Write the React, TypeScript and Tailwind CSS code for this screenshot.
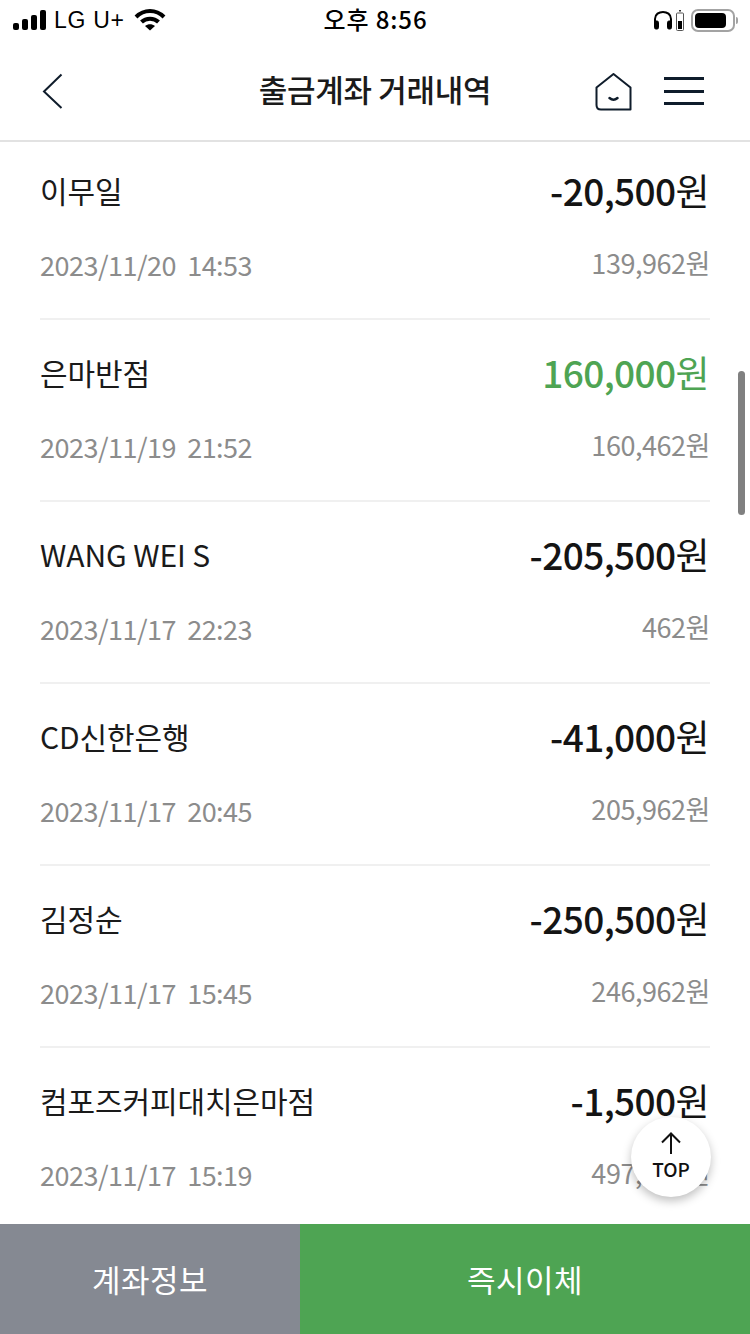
const transactions = [
  { name: "이무일", date: "2023/11/20  14:53", amount: "-20,500", balance: "139,962원" },
  { name: "은마반점", date: "2023/11/19  21:52", amount: "160,000", balance: "160,462원", income: true },
  { name: "WANG WEI S", date: "2023/11/17  22:23", amount: "-205,500", balance: "462원" },
  { name: "CD신한은행", date: "2023/11/17  20:45", amount: "-41,000", balance: "205,962원" },
  { name: "김정순", date: "2023/11/17  15:45", amount: "-250,500", balance: "246,962원" },
  { name: "컴포즈커피대치은마점", date: "2023/11/17  15:19", amount: "-1,500", balance: "497,462원" },
];

function StatusBar() {
  return (
    <div className="flex h-10 items-center justify-between pl-[13px] pr-[12px]">
      <div className="flex w-[200px] items-center">
        <svg width="35" height="20" viewBox="0 0 35 20" fill="#000">
          <rect x="0" y="13" width="6" height="7" rx="2" />
          <rect x="9" y="9" width="6" height="11" rx="2" />
          <rect x="18" y="5" width="6" height="15" rx="2" />
          <rect x="27" y="0" width="6" height="20" rx="2" />
        </svg>
        <span className="ml-[6px] text-[23px] leading-none tracking-[0.7px] text-black [font-family:'Liberation_Sans',sans-serif]">LG U+</span>
        <svg className="ml-[9px]" width="32" height="22" viewBox="0 0 32 22" fill="none" stroke="#000" strokeWidth="4">
          <path d="M2 8 C10 0 22 0 30 8" />
          <path d="M7.5 13 C12 8.5 20 8.5 24.5 13" />
          <path d="M11 17 L16 21.5 L21 17 C18 14.5 14 14.5 11 17 Z" fill="#000" stroke="none" />
        </svg>
      </div>
      <span className="-translate-y-[1px] text-[24px] font-medium leading-none tracking-[0.9px] text-black">오후 8:56</span>
      <div className="flex w-[200px] items-center justify-end">
        <svg width="20" height="20" viewBox="0 0 20 20" fill="none" stroke="#000" strokeWidth="2">
          <path d="M2 14 V9 C2 -0.5 18 -0.5 18 9 V14" />
          <rect x="1.5" y="11" width="4" height="8" rx="1.5" fill="#000" strokeWidth="1" />
          <rect x="14.5" y="11" width="4" height="8" rx="1.5" fill="#000" strokeWidth="1" />
        </svg>
        <svg className="ml-[3px]" width="8" height="21" viewBox="0 0 8 21">
          <rect x="3" y="0" width="2" height="1.5" fill="#333" />
          <rect x="0.5" y="3" width="7" height="17.5" rx="1" fill="none" stroke="#555" />
          <rect x="2" y="11" width="4" height="8" fill="#000" />
        </svg>
        <div className="ml-[7px] flex h-[23px] w-[44px] items-center rounded-[7px] border-2 border-[#a3a3a3] p-[2px]">
          <div className="h-full w-[31px] rounded-[4px] bg-black" />
        </div>
        <div className="ml-[1px] h-[7px] w-[2px] rounded-r-sm bg-[#a3a3a3]" />
      </div>
    </div>
  );
}

function NavBar() {
  return (
    <div className="relative flex h-[102px] items-start justify-between border-b-2 border-[#e2e2e2] pl-[42px] pr-[46px] pt-[33px]">
      <svg width="22" height="36" viewBox="0 0 22 36" fill="none" stroke="#0f1c2b" strokeWidth="2">
        <path d="M19.5 1.5 L2 18.5 L19.5 35" />
      </svg>
      <h1 className="absolute inset-x-0 top-[31px] text-center text-[31px] font-medium leading-[36px] tracking-[-0.3px] text-[#1a1a1a]">출금계좌 거래내역</h1>
      <div className="flex items-start gap-[32px]">
        <svg width="37" height="38" viewBox="0 0 37 38" fill="none" stroke="#0f1c2b" strokeWidth="2">
          <path d="M18.5 1 L35.5 14.5 V36.5 H6 Q1.5 36.5 1.5 32 V14.5 Z" strokeLinejoin="round" />
          <path d="M14.5 25 Q18.5 28.5 22.5 25" strokeWidth="2.5" strokeLinecap="round" />
        </svg>
        <div className="flex h-[28px] w-[40px] translate-y-[4px] flex-col justify-between">
          <div className="h-[3px] bg-[#0f1c2b]" />
          <div className="h-[3px] bg-[#0f1c2b]" />
          <div className="h-[3px] bg-[#0f1c2b]" />
        </div>
      </div>
    </div>
  );
}

export default function App() {
  return (
    <div className="relative flex h-[1334px] w-[750px] flex-col overflow-hidden bg-white [font-family:'Noto_Sans_CJK_KR',sans-serif]">
      <StatusBar />
      <NavBar />

      <div className="h-[1082px] overflow-hidden">
        <div className="-mt-[4px] px-10">
          {transactions.map((tx) => (
            <div key={tx.date} className="h-[182px] border-b-2 border-[#f0f0f0] pt-[27px]">
              <div className="flex h-[50px] items-center justify-between">
                <span className="text-[30px] leading-[50px] tracking-[-0.1px] text-[#1a1a1a]">{tx.name}</span>
                <span className={`pr-[1px] text-[37px] font-medium leading-[50px] tracking-[-0.6px] ${tx.income ? "text-[#4ea453]" : "text-[#141414]"}`}>
                  {tx.amount}
                  <span className="font-normal">원</span>
                </span>
              </div>
              <div className="mt-[36px] flex h-[28px] items-center justify-between text-[#8c8c8c]">
                <span className="whitespace-pre text-[27px] leading-[28px] tracking-[-0.5px]">{tx.date}</span>
                <span className="-translate-y-[2px] text-[27px] leading-[28px] tracking-[-0.45px]">{tx.balance}</span>
              </div>
            </div>
          ))}
        </div>
      </div>

      <div className="flex h-[110px]">
        <div className="flex w-[300px] items-center justify-center bg-[#858992] text-[31px] tracking-[0.5px] text-white">계좌정보</div>
        <div className="flex flex-1 items-center justify-center bg-[#4ea453] text-[31px] tracking-[0.5px] text-white">즉시이체</div>
      </div>

      <div className="absolute left-[738px] top-[371px] h-[144px] w-[7px] rounded-full bg-[#808080]" />

      <div className="absolute left-[631px] top-[1117px] flex h-[80px] w-[80px] flex-col items-center rounded-full bg-white pt-[15px] shadow-[0_4px_10px_rgba(0,0,0,0.25)]">
        <svg width="20" height="22" viewBox="0 0 20 22" fill="none" stroke="#111" strokeWidth="2">
          <path d="M1 10.5 L10 1.5 L19 10.5 M10 1.5 V22" />
        </svg>
        <span className="mt-[3px] text-[19px] font-medium leading-[24px] text-[#111]">TOP</span>
      </div>
    </div>
  );
}
